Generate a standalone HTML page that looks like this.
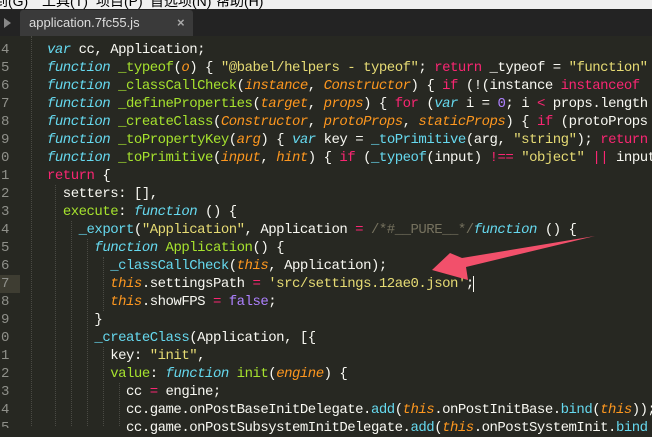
<!DOCTYPE html>
<html><head><meta charset="utf-8"><style>
body{margin:0;width:652px;height:426px;overflow:hidden;background:#272822;position:relative;font-family:"Liberation Mono",monospace}
.menu{position:absolute;left:0;top:0;width:652px;height:9px;background:#f0f0f0;overflow:hidden}
.menu span{position:absolute;top:-9px;font:14px "Liberation Sans","Noto Sans CJK SC",sans-serif;color:#000}
.tabs{position:absolute;left:0;top:9px;width:652px;height:27px;background:#232323}
.tab{position:absolute;left:20px;top:1px;width:173px;height:26px;background:#3a3a3a;border-radius:3px 3px 0 0;color:#ddd;font:13px "Liberation Sans",sans-serif;line-height:26px}
.tab b{position:absolute;left:9px;font-weight:normal}
.tab i{position:absolute;left:157px;font-style:normal;color:#aaa;font-weight:bold}
.play{position:absolute;left:4px;top:18px;width:0;height:0;border-left:7px solid #888;border-top:5px solid transparent;border-bottom:5px solid transparent}
.gut{position:absolute;left:0;top:38px;width:30px;height:390px;overflow:hidden}
.gut div{position:absolute;left:1px;width:10px;color:#8f908a;font-size:14px;height:18px;line-height:18px}
.hl{position:absolute;left:0;top:275px;width:20px;height:18px;background:#3e3d32}
pre{position:absolute;left:47px;top:41px;margin:0;font:14px "Liberation Mono",monospace;letter-spacing:-0.5px;line-height:18px;color:#f8f8f2;white-space:pre}
.k{color:#66d9ef;font-style:italic}.f{color:#a6e22e}.s{color:#e6db74}.p{color:#fd971f;font-style:italic}.r{color:#f92672}.n{color:#ae81ff}.c{color:#75715e}.t{color:#fd971f;font-style:italic}.b{color:#66d9ef}
.g{position:absolute;width:0;border-left:1px dotted #4a4a44}
</style></head><body>
<div class="menu"><span style="left:-6px">到(G)</span><span style="left:42px">工具(T)</span><span style="left:96px">项目(P)</span><span style="left:150px">首选项(N)</span><span style="left:216px">帮助(H)</span></div>
<div class="tabs"></div><div class="play"></div>
<div class="tab" style="top:10px"><b>application.7fc55.js</b><i>×</i></div>
<div class="hl"></div>
<div class="gut">
<div style="top:3px">4</div><div style="top:21px">5</div><div style="top:39px">6</div><div style="top:57px">7</div><div style="top:75px">8</div><div style="top:93px">9</div><div style="top:111px">0</div><div style="top:129px">1</div><div style="top:147px">2</div><div style="top:165px">3</div><div style="top:183px">4</div><div style="top:201px">5</div><div style="top:219px">6</div><div style="top:237px">7</div><div style="top:255px">8</div><div style="top:273px">9</div><div style="top:291px">0</div><div style="top:309px">1</div><div style="top:327px">2</div><div style="top:345px">3</div><div style="top:363px">4</div><div style="top:381px">5</div>
</div>
<div class="g" style="left:31px;top:36px;height:390px"></div>
<div class="g" style="left:55px;top:185px;height:241px"></div>
<div class="g" style="left:71px;top:221px;height:205px"></div>
<div class="g" style="left:87px;top:239px;height:187px"></div>
<div class="g" style="left:103px;top:257px;height:54px"></div>
<div class="g" style="left:103px;top:347px;height:79px"></div>
<div class="g" style="left:119px;top:383px;height:43px"></div>
<pre><span class="k">var</span> cc, Application;
<span class="k">function</span> <span class="f">_typeof</span>(<span class="p">o</span>) { <span class="s">"@babel/helpers - typeof"</span>; <span class="r">return</span> _typeof = <span class="s">"function"</span>
<span class="k">function</span> <span class="f">_classCallCheck</span>(<span class="p">instance</span>, <span class="p">Constructor</span>) { <span class="r">if</span> (!(instance <span class="r">instanceof</span>
<span class="k">function</span> <span class="f">_defineProperties</span>(<span class="p">target</span>, <span class="p">props</span>) { <span class="r">for</span> (<span class="k">var</span> i = <span class="n">0</span>; i <span class="r">&lt;</span> props.length
<span class="k">function</span> <span class="f">_createClass</span>(<span class="p">Constructor</span>, <span class="p">protoProps</span>, <span class="p">staticProps</span>) { <span class="r">if</span> (protoProps
<span class="k">function</span> <span class="f">_toPropertyKey</span>(<span class="p">arg</span>) { <span class="k">var</span> key = <span class="b">_toPrimitive</span>(arg, <span class="s">"string"</span>); <span class="r">return</span>
<span class="k">function</span> <span class="f">_toPrimitive</span>(<span class="p">input</span>, <span class="p">hint</span>) { <span class="r">if</span> (<span class="b">_typeof</span>(input) <span class="r">!==</span> <span class="s">"object"</span> <span class="r">||</span> input
<span class="r">return</span> {
  setters: [],
  <span class="f">execute</span>: <span class="k">function</span> () {
    <span class="b">_export</span>(<span class="s">"Application"</span>, Application <span class="r">=</span> <span class="c">/*#__PURE__*/</span><span class="k">function</span> () {
      <span class="k">function</span> <span class="f">Application</span>() {
        <span class="b">_classCallCheck</span>(<span class="t">this</span>, Application);
        <span class="t">this</span>.settingsPath <span class="r">=</span> <span class="s">'src/settings.12ae0.json'</span>;<span style="border-left:1px solid #f8f8f2;margin-left:-1px"></span>
        <span class="t">this</span>.showFPS <span class="r">=</span> <span class="n">false</span>;
      }
      <span class="b">_createClass</span>(Application, [{
        key: <span class="s">"init"</span>,
        <span class="f">value</span>: <span class="k">function</span> <span class="f">init</span>(<span class="p">engine</span>) {
          cc <span class="r">=</span> engine;
          cc.game.onPostBaseInitDelegate.<span class="b">add</span>(<span class="t">this</span>.onPostInitBase.<span class="b">bind</span>(<span class="t">this</span>));
          cc.game.onPostSubsystemInitDelegate.<span class="b">add</span>(<span class="t">this</span>.onPostSystemInit.<span class="b">bind</span></pre>
<svg style="position:absolute;left:0;top:0" width="652" height="426"><polygon points="432,270 450,253 462,258 595,236 466,267 468,280" fill="#f2506b"/></svg>
</body></html>
